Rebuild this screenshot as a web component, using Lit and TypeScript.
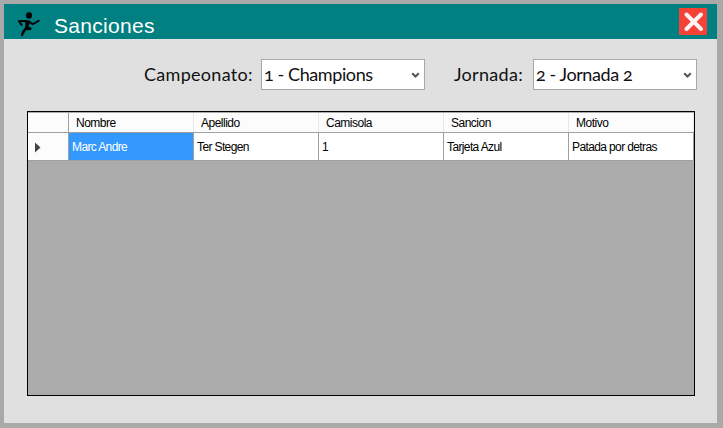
import { LitElement, html, css } from "lit";
import { customElement } from "lit/decorators.js";

@customElement("combo-box")
class ComboBox extends LitElement {
  static styles = css`
    :host { display: flex; box-sizing: border-box; width: 164px; height: 31px; border: 1px solid #a6a8ac;
      background: #fff; align-items: center; justify-content: space-between; padding: 0 4px 0 2px; }
    .value { white-space: pre; line-height: 26px; padding-bottom: 2px; letter-spacing: -0.4px; }
    svg { display: block; width: 9px; height: 8px; }
  `;
  render() {
    return html`<span class="value"><slot></slot></span>
      <svg viewBox="0 0 9 8"><path d="M1.2 2.2 L4.5 5.5 L7.8 2.2" fill="none" stroke="#555" stroke-width="2"/></svg>`;
  }
}

@customElement("app-root")
class AppRoot extends LitElement {
  static styles = css`
    * { box-sizing: border-box; }
    :host { display: block; width: 723px; height: 428px; background: #a9a9a9; padding: 4px 6px 5px 4px; box-sizing: border-box; overflow: hidden; }
    .window { width: 713px; height: 419px; background: #e0e0e0; }
    .bar { height: 35px; background: #008080; display: flex; align-items: flex-start; padding: 4px 10px 0 12px; }
    .runner { width: 26px; height: 30px; display: block; }
    .title { flex: 1; margin-left: 12px; padding-top: 4px; color: #fff; font: 21px/28px "Liberation Sans", Arial, sans-serif; letter-spacing: 0.3px; }
    .close { width: 28px; height: 27px; background: #f44336; display: block; }
    .filters { height: 72px; display: flex; align-items: flex-start; padding: 20px 20px 0 140px; color: #111;
      font: 18px/30px Lato, sans-serif; font-feature-settings: "onum" 1; }
    .label { white-space: nowrap; }
    .l1 { width: 117px; letter-spacing: 0.3px; }
    .l2 { width: 79px; margin-left: 29px; letter-spacing: 0.3px; }
    .grid { margin-left: 23px; width: 668px; height: 285px; border: 1px solid #000; background: #ababab;
      font: 12px/14px "Liberation Sans", Arial, sans-serif; color: #000; padding-top: 1px; letter-spacing: -0.62px; }
    .row { display: grid; grid-template-columns: 41px repeat(5, 125px); width: 666px; }
    .head { height: 20px; background: #fcfcfd; border-bottom: 1px solid #a0a0a0; letter-spacing: -0.5px; }
    .head div { border-right: 1px solid #e6e6ec; padding: 3px 0 0 7px; }
    .head div:first-child { border-right-color: #a0a0a0; }
    .data { height: 28px; background: #fff; border-bottom: 1px solid #a0a0a0; }
    .data div { border-right: 1px solid #a0a0a0; padding: 7px 0 0 3px; white-space: nowrap; }
    .data .marker { background: #fcfcfd; padding: 9px 0 0 7px; }
    .marker svg { display: block; width: 6px; height: 11px; }
    .data .selected { background: #3399ff; color: #fff; }
  `;
  heads = ["Nombre", "Apellido", "Camisola", "Sancion", "Motivo"];
  cells = ["Marc Andre", "Ter Stegen", "1", "Tarjeta Azul", "Patada por detras"];
  render() {
    return html`<div class="window">
      <div class="bar">
        <svg class="runner" viewBox="0 0 26 30">
          <circle cx="13" cy="7.4" r="3.1"/>
          <path d="M8 12.2 L12.5 12.2 L14.3 14.2 L12.3 18.6 L15.8 20 L15 22 L9.8 22.2 L6.6 28.2 L4.8 27.8 L6 23.5 L9.2 19.2 L9.6 15.5 Z"/>
          <path d="M5.6 16.8 L2.8 13.2 L9 13 M13.2 13.6 L16.7 16.3 L22.8 12.7" fill="none" stroke="#000" stroke-width="1.9" stroke-linejoin="round" stroke-linecap="round"/>
        </svg>
        <div class="title">Sanciones</div>
        <svg class="close" viewBox="0 0 28 27"><path d="M7.5 6.5 L22 21 M22 6.5 L7.5 21" stroke="#fff" stroke-opacity=".94" stroke-width="4" stroke-linecap="round"/></svg>
      </div>
      <div class="filters">
        <span class="label l1">Campeonato:</span><combo-box>1 - Champions</combo-box>
        <span class="label l2">Jornada:</span><combo-box>2 - Jornada 2</combo-box>
      </div>
      <div class="grid">
        <div class="row head"><div></div>${this.heads.map(h => html`<div>${h}</div>`)}</div>
        <div class="row data"><div class="marker"><svg viewBox="0 0 6 11"><path d="M0 .5 L5.5 5.5 L0 10.5Z" fill="#444"/></svg></div>
          ${this.cells.map((c, i) => html`<div class=${i ? "" : "selected"}>${c}</div>`)}</div>
      </div>
    </div>`;
  }
}
